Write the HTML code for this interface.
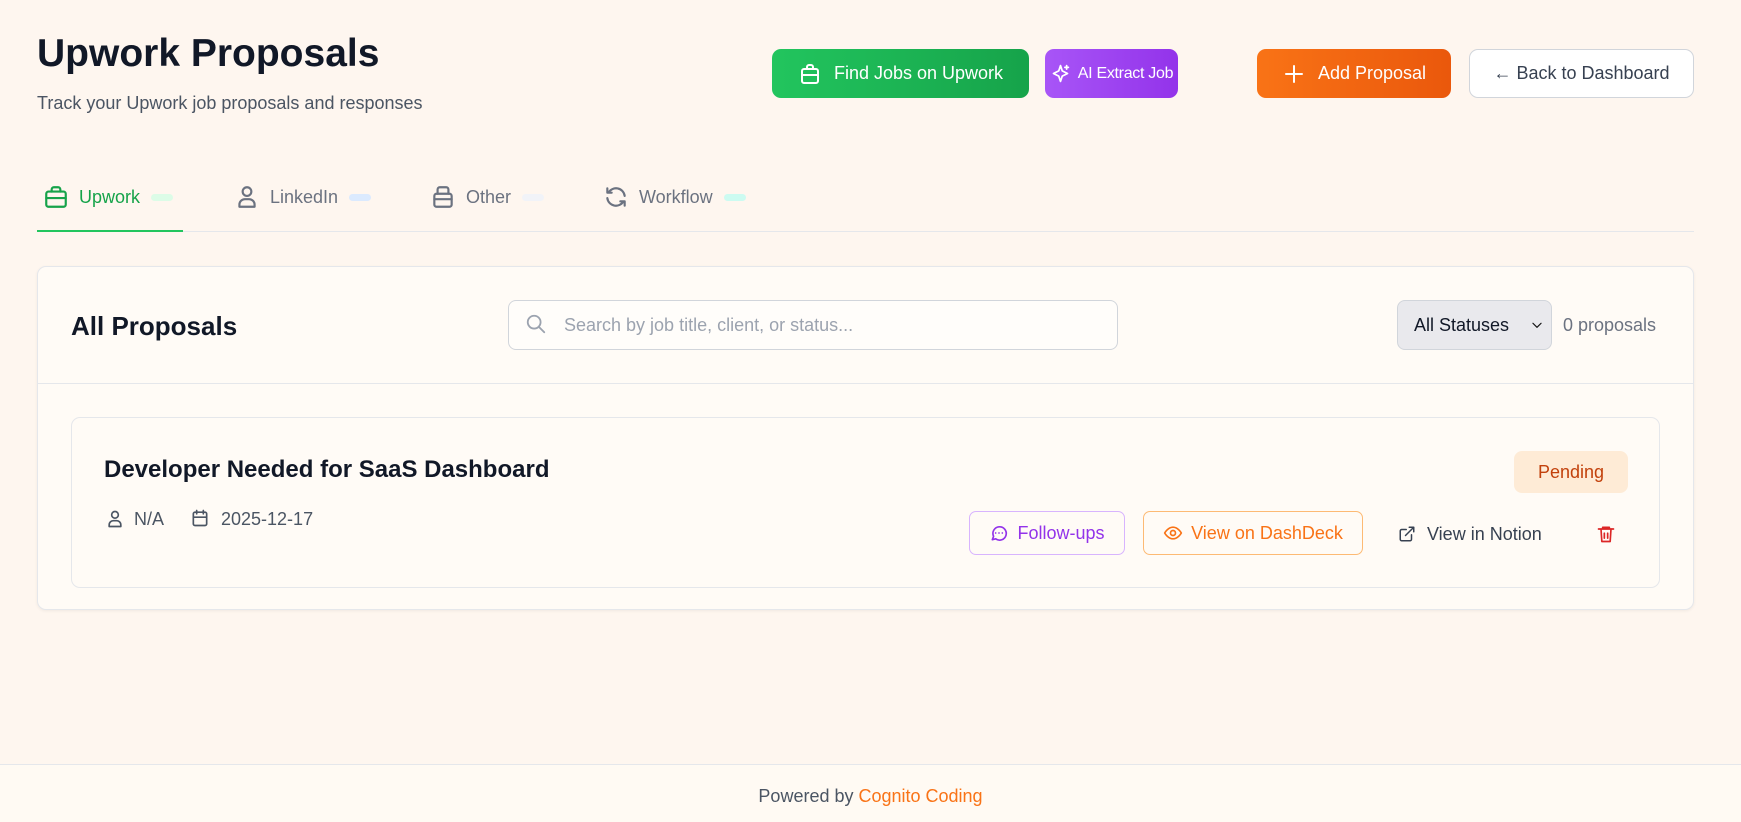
<!DOCTYPE html>
<html><head><meta charset="utf-8"><style>
*{box-sizing:border-box;margin:0;padding:0}
body{width:1741px;height:822px;background:#fef6ef;font-family:"Liberation Sans",sans-serif;position:relative;overflow:hidden;color:#111827}
.a{position:absolute}
.btn{position:absolute;top:49px;height:49px;border-radius:9px;color:#fff;font-size:18px;display:flex;align-items:center;justify-content:center;gap:12px;white-space:nowrap}
.btn svg{width:24px;height:24px;fill:none;stroke:#fff;stroke-width:2;stroke-linecap:round;stroke-linejoin:round;flex:none}
.tab{position:absolute;top:183px;height:28px;display:flex;align-items:center;font-size:18px;color:#6b7280}
.tab svg{width:26px;height:26px;fill:none;stroke:#6b7280;stroke-width:2;stroke-linecap:round;stroke-linejoin:round;margin-right:10px}
.pill{display:inline-block;width:22px;height:7px;border-radius:4px;margin-left:11px}
.ic{fill:none;stroke-width:2;stroke-linecap:round;stroke-linejoin:round}
</style></head><body>
<div class="a" style="left:37px;top:32px;font-size:39px;font-weight:bold;color:#111827">Upwork Proposals</div>
<div class="a" style="left:37px;top:93px;font-size:18px;color:#4b5563">Track your Upwork job proposals and responses</div>

<div class="btn" style="left:772px;width:257px;background:linear-gradient(90deg,#22c55e,#16a34a)"><svg viewBox="0 0 24 24"><rect x="4" y="7" width="16" height="14" rx="2"/><path d="M9 7V5a2 2 0 0 1 2-2h2a2 2 0 0 1 2 2v2M4 13h16"/></svg>Find Jobs on Upwork</div>
<div class="btn" style="left:1045px;width:133px;gap:7px;font-size:16px;letter-spacing:-0.3px;background:linear-gradient(90deg,#a855f7,#9333ea)"><svg viewBox="0 0 24 24" style="width:21px;height:21px"><path d="M12 3l2 6 6 3-6 3-2 6-2-6-6-3 6-3z"/><path d="M19 3v4M17 5h4"/></svg>AI Extract Job</div>
<div class="btn" style="left:1257px;width:194px;background:linear-gradient(90deg,#f97316,#ea580c)"><svg viewBox="0 0 24 24"><path d="M12 4v16M4 12h16"/></svg>Add Proposal</div>
<div class="btn" style="left:1469px;width:225px;background:#fff;border:1px solid #d1d5db;color:#374151">← Back to Dashboard</div>

<div class="tab" style="left:43px;color:#16a34a"><svg viewBox="0 0 24 24" style="stroke:#16a34a"><rect x="3" y="7" width="18" height="14" rx="2"/><path d="M8 7V5a2 2 0 0 1 2-2h4a2 2 0 0 1 2 2v2M3 13h18"/></svg>Upwork<span class="pill" style="background:#dcfce7"></span></div>
<div class="tab" style="left:234px"><svg viewBox="0 0 24 24"><circle cx="12" cy="7" r="4"/><path d="M5 21v-2a5 5 0 0 1 5-5h4a5 5 0 0 1 5 5v2z"/></svg>LinkedIn<span class="pill" style="background:#dbeafe"></span></div>
<div class="tab" style="left:430px"><svg viewBox="0 0 24 24"><rect x="4" y="9" width="16" height="12" rx="2"/><path d="M7 9V5a2 2 0 0 1 2-2h6a2 2 0 0 1 2 2v4M4 14h16"/></svg>Other<span class="pill" style="background:#f1f3f8"></span></div>
<div class="tab" style="left:603px"><svg viewBox="0 0 24 24"><path d="M20 11a8 8 0 0 0-14.9-3M4 4v4h4M4 13a8 8 0 0 0 14.9 3M20 20v-4h-4"/></svg>Workflow<span class="pill" style="background:#ccfbf1"></span></div>
<div class="a" style="left:37px;top:231px;width:1657px;height:1px;background:#e5e7eb"></div>
<div class="a" style="left:37px;top:230px;width:146px;height:2px;background:#22c55e"></div>

<div class="a" style="left:37px;top:266px;width:1657px;height:344px;background:#fffbf6;border:1px solid #e5e7eb;border-radius:9px;box-shadow:0 1px 3px rgba(0,0,0,.06)"></div>
<div class="a" style="left:38px;top:383px;width:1655px;height:1px;background:#e5e7eb"></div>
<div class="a" style="left:71px;top:311px;font-size:26px;font-weight:600">All Proposals</div>
<div class="a" style="left:508px;top:300px;width:610px;height:50px;border:1px solid #d1d5db;border-radius:8px;background:#fffdfa"></div>
<svg class="a ic" style="left:525px;top:313px;stroke:#9ca3af" width="22" height="22" viewBox="0 0 24 24"><circle cx="10" cy="10" r="7"/><path d="M15 15l6 6"/></svg>
<div class="a" style="left:564px;top:315px;font-size:18px;color:#9ca3af">Search by job title, client, or status...</div>
<div class="a" style="left:1397px;top:300px;width:155px;height:50px;border:1px solid #d1d5db;border-radius:8px;background:#e9e9ed"></div>
<div class="a" style="left:1414px;top:315px;font-size:18px;color:#111827">All Statuses</div>
<svg class="a ic" style="left:1530px;top:318px;stroke:#111" width="14" height="14" viewBox="0 0 24 24"><path d="M5 9l7 7 7-7"/></svg>
<div class="a" style="left:1563px;top:315px;font-size:18px;color:#6b7280">0 proposals</div>

<div class="a" style="left:71px;top:417px;width:1589px;height:171px;border:1px solid #e5e7eb;border-radius:9px;background:#fffbf6"></div>
<div class="a" style="left:104px;top:456px;font-size:24px;font-weight:600">Developer Needed for SaaS Dashboard</div>
<svg class="a ic" style="left:105px;top:509px;stroke:#4b5563" width="20" height="20" viewBox="0 0 24 24"><circle cx="12" cy="7" r="4"/><path d="M5 21v-2a5 5 0 0 1 5-5h4a5 5 0 0 1 5 5v2z"/></svg>
<div class="a" style="left:134px;top:509px;font-size:18px;color:#4b5563">N/A</div>
<svg class="a ic" style="left:190px;top:508px;stroke:#4b5563" width="20" height="20" viewBox="0 0 24 24"><rect x="4" y="5" width="16" height="16" rx="2"/><path d="M8 3v4M16 3v4M4 11h16"/></svg>
<div class="a" style="left:221px;top:509px;font-size:18px;color:#4b5563">2025-12-17</div>

<div class="a" style="left:1514px;top:451px;width:114px;height:42px;border-radius:8px;background:#feebd6;color:#c2410c;font-size:18px;display:flex;align-items:center;justify-content:center">Pending</div>
<div class="a" style="left:969px;top:511px;width:156px;height:44px;border:1px solid #d8b4fe;border-radius:7px;color:#9333ea;font-size:18px;display:flex;align-items:center;justify-content:center;gap:8px"><svg class="ic" style="stroke:#9333ea" width="20" height="20" viewBox="0 0 24 24"><path d="M4 20l1.5-4A8 8 0 1 1 8 19z"/><path d="M8 12h.01M12 12h.01M16 12h.01"/></svg>Follow-ups</div>
<div class="a" style="left:1143px;top:511px;width:220px;height:44px;border:1px solid #fdba74;border-radius:7px;color:#f97316;font-size:18px;display:flex;align-items:center;justify-content:center;gap:8px"><svg class="ic" style="stroke:#f97316" width="20" height="20" viewBox="0 0 24 24"><path d="M2 12s4-7 10-7 10 7 10 7-4 7-10 7S2 12 2 12z"/><circle cx="12" cy="12" r="3"/></svg>View on DashDeck</div>
<svg class="a ic" style="left:1398px;top:525px;stroke:#374151" width="18" height="18" viewBox="0 0 24 24"><path d="M18 13v6a2 2 0 0 1-2 2H5a2 2 0 0 1-2-2V8a2 2 0 0 1 2-2h6M15 3h6v6M10 14L21 3"/></svg>
<div class="a" style="left:1427px;top:524px;font-size:18px;color:#374151">View in Notion</div>
<svg class="a ic" style="left:1596px;top:524px;stroke:#dc2626" width="20" height="20" viewBox="0 0 24 24"><path d="M3 6h18M8 6V4h8v2M6 6l1 15h10l1-15M10 11v6M14 11v6"/></svg>

<div class="a" style="left:0;top:764px;width:1741px;height:58px;background:#fffaf3;border-top:1px solid #e5e7eb"></div>
<div class="a" style="left:0;top:786px;width:1741px;text-align:center;font-size:18px;color:#4b5563">Powered by <span style="color:#f97316">Cognito Coding</span></div>
</body></html>
